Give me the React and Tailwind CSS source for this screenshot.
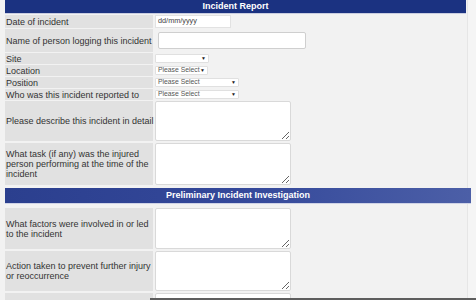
import React from "react";

const font = "font-['Liberation_Sans',Arial,sans-serif]";

function Row({ h, mt, label, children }) {
  return (
    <div className={`flex gap-[1px] ${mt}`} style={{ height: h }}>
      <div className="w-[148px] shrink-0 bg-[#e1e1e1] flex items-center pl-[1px] text-[9px] leading-[10px] text-[#333] whitespace-nowrap">
        <div>{label}</div>
      </div>
      <div className="flex-1 flex items-stretch">{children}</div>
    </div>
  );
}

function FakeSelect({ w, text }) {
  return (
    <div
      className="ml-[1px] self-center h-[9px] bg-white border border-[#e0e0e0] rounded-[1px] flex items-center justify-between pl-[2px] pr-[2px] text-[6.8px] text-[#555] whitespace-nowrap overflow-hidden"
      style={{ width: w }}
    >
      <span className="leading-none">{text}</span>
      <span className="text-[5px] leading-none text-[#222] shrink-0">▼</span>
    </div>
  );
}

function Area() {
  return (
    <textarea
      readOnly
      className="ml-[1px] w-[136px] h-full bg-white border border-[#d9d9d9] rounded-[2px] resize-y block"
    />
  );
}

export default function App() {
  return (
    <div
      className={`w-[476px] h-[300px] overflow-hidden relative ${font} bg-[linear-gradient(to_right,#f2f2f2_467px,#e6e6e6_467px,#e6e6e6_468px,#f5f5f5_468px)]`}
    >
      <div className="ml-[5px] w-[461px] flex flex-col">
        <div className="h-[14px] bg-[#1b3281] flex items-center justify-center pb-[1px] text-white font-bold text-[9px] leading-none border-b border-[#c9cde0]">
          Incident Report
        </div>
        <Row h={13} mt="mt-[1px]" label="Date of incident">
          <div className="ml-[1px] w-[76px] h-[13px] bg-white border border-[#e2e2e2] flex items-center pl-[2px] text-[7.3px] text-[#444]">
            dd/mm/yyyy
          </div>
        </Row>
        <Row h={23} mt="mt-[1px]" label="Name of person logging this incident">
          <div className="ml-[4px] self-center w-[148px] h-[17px] bg-white border border-[#cfcfcf] rounded-[2px]" />
        </Row>
        <Row h={11} mt="mt-[1px]" label="Site">
          <FakeSelect w={54} text="" />
        </Row>
        <Row h={11} mt="mt-[1px]" label="Location">
          <FakeSelect w={53} text="Please Select" />
        </Row>
        <Row h={11} mt="mt-[1px]" label="Position">
          <FakeSelect w={84} text="Please Select" />
        </Row>
        <Row h={11} mt="mt-[1px]" label="Who was this incident reported to">
          <FakeSelect w={84} text="Please Select" />
        </Row>
        <Row h={40} mt="mt-[1px]" label="Please describe this incident in detail">
          <Area />
        </Row>
        <Row
          h={42}
          mt="mt-[2px]"
          label={
            <>
              What task (if any) was the injured
              <br />
              person performing at the time of the
              <br />
              incident
            </>
          }
        >
          <Area />
        </Row>
        <div className="mt-[3px] w-[466px] h-[16px] bg-gradient-to-r from-[#2b3f8e] via-[#34489a] to-[#4c5fa7] flex items-center justify-center text-white font-bold text-[9px] leading-none border-b border-[#cfd3e6]">
          Preliminary Incident Investigation
        </div>
        <Row
          h={41}
          mt="mt-[4px]"
          label={
            <>
              What factors were involved in or led
              <br />
              to the incident
            </>
          }
        >
          <Area />
        </Row>
        <Row
          h={40}
          mt="mt-[2px]"
          label={
            <>
              Action taken to prevent further injury
              <br />
              or reoccurrence
            </>
          }
        >
          <Area />
        </Row>
        <Row h={40} mt="mt-[2px]" label="">
          <Area />
        </Row>
      </div>
      <div className="absolute left-[150px] right-0 bottom-0 h-[2px] bg-[#5e5e5e]" />
    </div>
  );
}
